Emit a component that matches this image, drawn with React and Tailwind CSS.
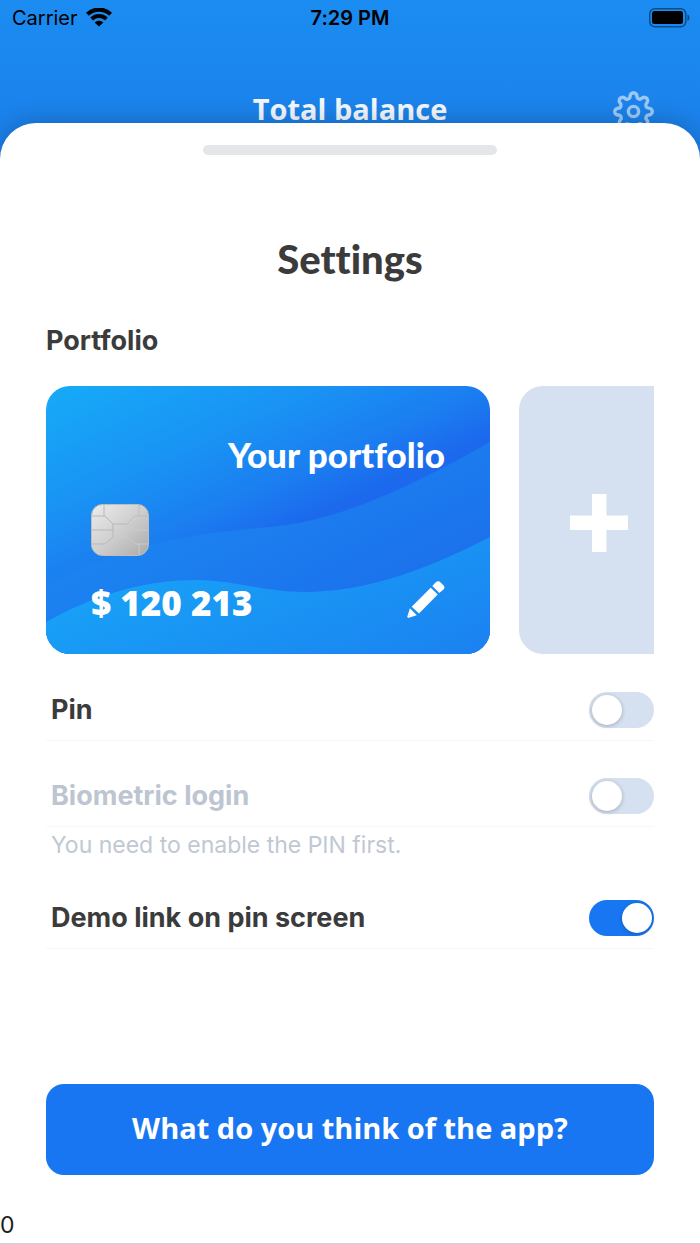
import React, { useState } from 'react';
import { FiSettings } from 'react-icons/fi';

// --- Icons ---
const WifiIcon = () => (
    <svg width="26" height="20" viewBox="0 0 26 20" fill="none" stroke="#000" aria-hidden="true">
        <path d="M1.4 6.2C8 0.1 18 0.1 24.6 6.2" strokeWidth="4.2" />
        <path d="M5.6 11C10 7.1 16 7.1 20.4 11" strokeWidth="4" />
        <path d="M8.6 14.4C11.3 12.2 14.7 12.2 17.4 14.4L13 18.4Z" fill="#000" stroke="none" />
    </svg>
);

const BatteryIcon = () => (
    <svg width="41" height="20" viewBox="0 0 41 20" aria-hidden="true">
        <rect x="0.75" y="0.75" width="36" height="18" rx="5" fill="none" stroke="#000" strokeOpacity="0.45" strokeWidth="1.5" />
        <rect x="3" y="3" width="31" height="13" rx="2.5" fill="#000" />
        <path d="M38.5 6.5C41 7.5 41 12 38.5 13Z" fill="#000" fillOpacity="0.5" />
    </svg>
);

const PencilIcon = () => (
    <svg width="38" height="38" viewBox="0 0 38 38" fill="#fff" aria-hidden="true">
        <path d="M25.3 6L28.6 2.6Q31 0 33.4 2.3L36.4 5.3Q38.6 7.6 36.2 9.8L32.3 13Z" />
        <path d="M4.7 26.7L23.7 7.7L30.7 14.5L12 33.4Z" />
        <path d="M2.9 28.2L9.8 35.3L1.8 37.8Q0.1 38 0.4 36.2Z" />
    </svg>
);

const PlusIcon = () => (
    <svg width="58" height="58" viewBox="0 0 58 58" fill="#fff" aria-hidden="true">
        <path d="M22 0H36.5V21.5H58V36H36.5V58H22V36H0V21.5H22Z" />
    </svg>
);

const ChipIcon = () => (
    <svg width="58" height="52" viewBox="0 0 58 52" fill="none" aria-hidden="true">
        <defs>
            <linearGradient id="chip" x1="0" y1="0" x2="1" y2="1">
                <stop offset="0" stopColor="#ececec" />
                <stop offset="0.5" stopColor="#cfcfcf" />
                <stop offset="1" stopColor="#aaaaaa" />
            </linearGradient>
        </defs>
        <rect x="0.5" y="0.5" width="57" height="51" rx="11" fill="url(#chip)" stroke="#c0bdba" />
        <path d="M13 1V12M1 12H14L22 20V33L14 40H1M1 26H22M22 20H36" stroke="#b8b8b8" />
        <path d="M48 1V12M57 12H44L36 20" stroke="#bcbcbc" />
        <path d="M36 20V33L44 40H57M36 26H57M22 33H36M13 40V51M48 40V51" stroke="#cbcbcb" />
    </svg>
);

const CardWaves = () => (
    <svg className="absolute inset-0 h-full w-full" viewBox="0 0 444 268" preserveAspectRatio="none" aria-hidden="true">
        <defs>
            <linearGradient id="top" gradientUnits="userSpaceOnUse" x1="0" y1="0" x2="96" y2="209">
                <stop offset="0" stopColor="#16abf8" />
                <stop offset="0.5" stopColor="#1993f4" />
                <stop offset="0.8" stopColor="#1b7ef0" />
                <stop offset="1" stopColor="#1c69ed" />
            </linearGradient>
            <linearGradient id="mid" gradientUnits="userSpaceOnUse" x1="100" y1="110" x2="200" y2="310">
                <stop offset="0" stopColor="#1b87f1" />
                <stop offset="1" stopColor="#1c6eeb" />
            </linearGradient>
            <linearGradient id="front" gradientUnits="userSpaceOnUse" x1="120" y1="180" x2="210" y2="400">
                <stop offset="0" stopColor="#18a0f6" />
                <stop offset="1" stopColor="#1b7cf0" />
            </linearGradient>
        </defs>
        <rect width="444" height="268" fill="url(#top)" />
        <path d="M0 200C40 180 75 165 117 156C152 148 190 144 224 141C300 134 375 95 444 56V268H0Z" fill="url(#mid)" />
        <path d="M0 236C45 211 94 194 151 194C188 194 218 206 257 206C325 206 385 181 444 151V268H0Z" fill="url(#front)" />
    </svg>
);

// --- Components ---
const StatusBar = () => (
    <div className="grid h-9 grid-cols-3 items-center px-3 text-[20px] leading-6 text-black">
        <div className="flex items-center gap-2">
            <span>Carrier</span>
            <WifiIcon />
        </div>
        <span className="text-center font-semibold">7:29 PM</span>
        <div className="-mr-0.5 flex justify-end">
            <BatteryIcon />
        </div>
    </div>
);

const SettingSwitch = ({ id, label, checked, disabled, onChange }) => (
    <div className="flex h-[62px] items-center justify-between border-b border-[#f7f7f8] pl-[5px]">
        <label
            htmlFor={id}
            className={`text-[27px] leading-8 font-bold ${disabled ? 'text-[#bcc5d0]' : 'text-[#3b3b3b]'}`}
        >
            {label}
        </label>
        <input
            id={id}
            type="checkbox"
            role="switch"
            checked={checked}
            disabled={disabled}
            onChange={(e) => onChange(e.target.checked)}
            className="h-9 w-[65px] shrink-0 appearance-none rounded-full bg-[#d5e0f0] p-[3px] before:block before:size-[30px] before:rounded-full before:bg-white before:shadow-[0_1px_4px_rgba(0,0,0,0.25)] checked:bg-[#1876f2] checked:before:translate-x-[30px]"
        />
    </div>
);

export default function App() {
    const [pin, setPin] = useState(false);
    const [biometric, setBiometric] = useState(false);
    const [demoLink, setDemoLink] = useState(true);

    return (
        <div className="flex min-h-screen flex-col bg-[#1b7de6] bg-[linear-gradient(to_bottom,#1b8cf1_0px,#1b86ee_80px,#1b7fe9_150px)] font-['Inter',sans-serif] [font-variant-ligatures:none]">
            <StatusBar />

            <header className="mt-[53px] grid h-11 grid-cols-[1fr_auto_1fr] items-center px-[46px]">
                <h2 className="col-start-2 pb-1 font-['Open_Sans',sans-serif] text-[29px] leading-10 font-bold text-[#f4f8fc]">Total balance</h2>
                <button type="button" aria-label="Settings" className="justify-self-end text-[#9cc8f7]">
                    <FiSettings size={41} />
                </button>
            </header>

            {/* The sheet slides over the lower edge of the header */}
            <main className="relative -mt-[10px] flex flex-1 flex-col rounded-t-[36px] border-b border-[#c9d6e2] bg-white pt-[22px] shadow-[0_-2px_24px_rgba(0,0,0,0.2)]">
                <div className="mx-auto h-[10px] w-[42%] rounded-full bg-[#e4e6ea]" />

                <div className="flex flex-1 flex-col px-[46px]">
                    <h1 className="mt-20 text-center font-['Lato',sans-serif] text-[40px] leading-[48px] font-black text-[#3b3b3b]">Settings</h1>
                    <h3 className="mt-[42px] text-[27px] leading-8 font-bold text-[#3b3b3b]">Portfolio</h3>

                    <div className="mt-[29px] flex gap-[29px] overflow-hidden">
                        <article className="relative flex h-[268px] w-[444px] shrink-0 flex-col overflow-hidden rounded-[24px] px-[45px]">
                            <CardWaves />
                            <h4 className="relative mt-12 text-right font-['Lato',sans-serif] text-[35px] leading-10 font-black text-white">Your portfolio</h4>
                            <div className="relative mt-[30px]">
                                <ChipIcon />
                            </div>
                            <div className="relative mt-6 flex items-start justify-between">
                                <span className="font-['Open_Sans',sans-serif] text-[35px] leading-[46px] font-extrabold text-white">$ 120 213</span>
                                <button type="button" aria-label="Edit portfolio">
                                    <PencilIcon />
                                </button>
                            </div>
                        </article>
                        <button
                            type="button"
                            aria-label="Add portfolio"
                            className="flex h-[268px] w-40 shrink-0 items-center justify-center rounded-[24px] bg-[#d5e0f0] pt-1.5"
                        >
                            <PlusIcon />
                        </button>
                    </div>

                    <div className="mt-[25px] flex flex-col gap-6">
                        <SettingSwitch id="pin" label="Pin" checked={pin} onChange={setPin} />
                        <div className="pb-0.5">
                            <SettingSwitch id="biometric" label="Biometric login" checked={biometric} disabled={!pin} onChange={setBiometric} />
                            <p className="mt-0.5 pl-[5px] text-[23px] leading-8 text-[#c0c8d3]">You need to enable the PIN first.</p>
                        </div>
                        <SettingSwitch id="demo-link" label="Demo link on pin screen" checked={demoLink} onChange={setDemoLink} />
                    </div>

                    <button
                        type="button"
                        className="mt-auto h-[91px] rounded-[18px] bg-[#1876f2] pb-1 font-['Open_Sans',sans-serif] text-[29px] leading-10 font-bold text-white"
                    >
                        What do you think of the app?
                    </button>
                </div>

                <p className="mt-[34px] pb-0.5 text-[23px] leading-8 text-[#1c1c1e]">0</p>
            </main>
        </div>
    );
}
